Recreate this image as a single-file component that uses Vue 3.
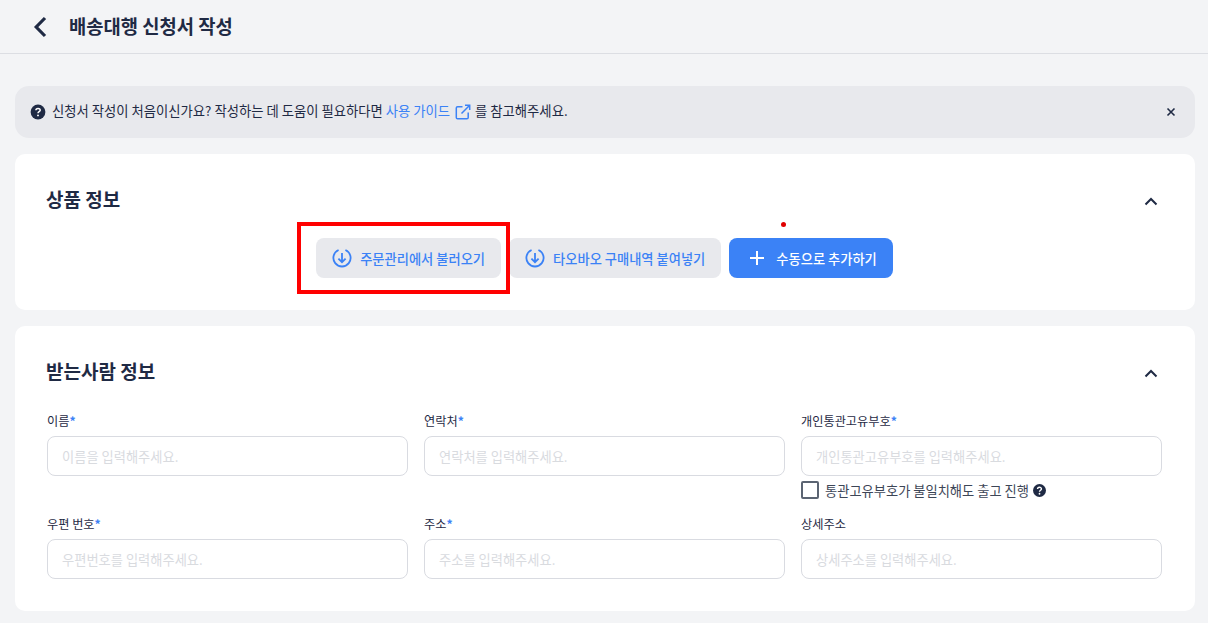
<script setup>
const rows = [
  { label: "이름", required: true, placeholder: "이름을 입력해주세요." },
  { label: "연락처", required: true, placeholder: "연락처를 입력해주세요." },
  { label: "개인통관고유부호", required: true, placeholder: "개인통관고유부호를 입력해주세요.", customs: true },
  { label: "우편 번호", required: true, placeholder: "우편번호를 입력해주세요." },
  { label: "주소", required: true, placeholder: "주소를 입력해주세요." },
  { label: "상세주소", required: false, placeholder: "상세주소를 입력해주세요." },
];
</script>

<template>
  <div class="page">
    <header class="top-bar">
      <svg class="back" width="14" height="22" viewBox="0 0 14 22" fill="none">
        <path d="M12 2 L3.2 11 L12 20" stroke="#1f2a44" stroke-width="3.2" />
      </svg>
      <h1>배송대행 신청서 작성</h1>
    </header>

    <main class="content">
      <div class="notice">
        <svg class="help" width="16" height="16" viewBox="0 0 16 16">
          <circle cx="8" cy="8" r="7.4" fill="#1f2a44" />
          <path d="M5.9 6.3 C5.9 3.8 10.2 3.8 10.2 6.2 C10.2 7.7 8 7.6 8 9.2" fill="none" stroke="#fff" stroke-width="1.5" />
          <circle cx="8" cy="11.4" r="0.95" fill="#fff" />
        </svg>
        <span class="notice-text">신청서 작성이 처음이신가요? 작성하는 데 도움이 필요하다면</span>
        <a class="guide">사용 가이드</a>
        <svg class="external" width="16" height="16" viewBox="0 0 16 16" fill="none" stroke="#3b82f6" stroke-width="1.5">
          <path d="M7.5 2.8 H2.6 A1.3 1.3 0 0 0 1.3 4.1 V13.4 A1.3 1.3 0 0 0 2.6 14.7 H11.9 A1.3 1.3 0 0 0 13.2 13.4 V8.5" />
          <path d="M6.5 9.5 L14.7 1.3 M10 1.3 H14.7 V6" />
        </svg>
        <span class="notice-text">를 참고해주세요.</span>
        <svg class="close" width="10" height="10" viewBox="0 0 10 10" fill="none" stroke="#1f2a44" stroke-width="1.6">
          <path d="M1.5 1.5 L8.5 8.5 M8.5 1.5 L1.5 8.5" />
        </svg>
      </div>

      <section class="card product">
        <div class="card-head">
          <h2>상품 정보</h2>
          <svg width="14" height="9" viewBox="0 0 14 9" fill="none" stroke="#1f2a44" stroke-width="2">
            <path d="M1.5 7.5 L7 2 L12.5 7.5" />
          </svg>
        </div>
        <div class="actions">
          <button class="btn soft first">
            <svg width="20" height="20" viewBox="0 0 20 20" fill="none" stroke="#3b82f6" stroke-width="1.8">
              <path d="M6.6 2 A8.6 8.6 0 1 0 13.4 2" />
              <path d="M10 5 V14 M6.4 10.6 L10 14.2 L13.6 10.6" />
            </svg>
            주문관리에서 불러오기
            <span class="highlight"></span>
          </button>
          <button class="btn soft">
            <svg width="20" height="20" viewBox="0 0 20 20" fill="none" stroke="#3b82f6" stroke-width="1.8">
              <path d="M6.6 2 A8.6 8.6 0 1 0 13.4 2" />
              <path d="M10 5 V14 M6.4 10.6 L10 14.2 L13.6 10.6" />
            </svg>
            타오바오 구매내역 붙여넣기
          </button>
          <button class="btn solid">
            <svg width="16" height="16" viewBox="0 0 16 16" fill="none" stroke="#fff" stroke-width="2">
              <path d="M8 1 V15 M1 8 H15" />
            </svg>
            수동으로 추가하기
            <span class="dot"></span>
          </button>
        </div>
      </section>

      <section class="card receiver">
        <div class="card-head">
          <h2>받는사람 정보</h2>
          <svg width="14" height="9" viewBox="0 0 14 9" fill="none" stroke="#1f2a44" stroke-width="2">
            <path d="M1.5 7.5 L7 2 L12.5 7.5" />
          </svg>
        </div>
        <div class="form-grid">
          <div v-for="row in rows" :key="row.label" class="field">
            <label>{{ row.label }}<em v-if="row.required">*</em></label>
            <input type="text" :placeholder="row.placeholder" />
            <div v-if="row.customs" class="check-row">
              <span class="checkbox"></span>
              <span>통관고유부호가 불일치해도 출고 진행</span>
              <svg width="13" height="13" viewBox="0 0 16 16">
                <circle cx="8" cy="8" r="8" fill="#1f2a44" />
                <path d="M5.6 6.2 C5.6 3.3 10.4 3.3 10.4 6.1 C10.4 7.8 8 7.7 8 9.5" fill="none" stroke="#fff" stroke-width="1.7" />
                <circle cx="8" cy="12" r="1.1" fill="#fff" />
              </svg>
            </div>
          </div>
        </div>
      </section>
    </main>
  </div>
</template>

<style scoped>
.page {
  height: 623px;
  overflow: hidden;
  background: #f3f4f6;
  color: #1f2a44;
  font-family: "Noto Sans CJK KR", "Noto Sans", sans-serif;
}
.top-bar {
  height: 53px;
  display: flex;
  align-items: center;
  padding-left: 33px;
  border-bottom: 1px solid #dcdee3;
}
.back {
  margin-right: 22px;
}
h1 {
  margin: 0 0 2px;
  font-size: 18.75px;
  font-weight: 700;
}
.content {
  padding: 32px 13px 0 15px;
  display: flex;
  flex-direction: column;
  gap: 16px;
}
.notice {
  height: 52px;
  display: flex;
  align-items: center;
  padding: 0 19px 0 15px;
  border-radius: 14px;
  background: #e8e9ed;
  font-size: 13.33px;
}
.help {
  margin-right: 6px;
}
.notice-text,
.guide {
  padding-bottom: 3px;
}
.guide {
  margin-left: 3px;
  color: #3b82f6;
}
.external {
  margin: 0 4px 0 5px;
}
.close {
  margin-left: auto;
}
.card {
  background: #fff;
  border-radius: 10px;
  padding: 0 32px 0 31px;
}
.card-head {
  height: 30px;
  display: flex;
  justify-content: space-between;
  align-items: center;
  padding-right: 5px;
}
h2 {
  margin: 0 0 4px;
  font-size: 19px;
  line-height: 26px;
  font-weight: 700;
}
.product {
  height: 156px;
  padding-top: 32px;
  box-sizing: border-box;
}
.actions {
  margin-top: 22px;
  display: flex;
  justify-content: center;
  gap: 8px;
}
.btn {
  position: relative;
  height: 40px;
  display: flex;
  align-items: center;
  gap: 8px;
  padding: 0 16px;
  border: 0;
  border-radius: 8px;
  font-family: inherit;
  font-size: 13.25px;
  font-weight: 500;
}
.soft {
  background: #e8e9ed;
  color: #3b82f6;
}
.solid {
  background: #3b82f6;
  color: #fff;
  gap: 11px;
  padding-left: 20px;
}
.highlight {
  position: absolute;
  z-index: 1;
  left: -19px;
  top: -16px;
  width: 205px;
  height: 64px;
  border: 4px solid #ff0000;
}
.dot {
  position: absolute;
  left: 52px;
  top: -16px;
  width: 5px;
  height: 5px;
  border-radius: 50%;
  background: #e00000;
}
.receiver {
  height: 285px;
  padding-top: 32px;
  box-sizing: border-box;
}
.form-grid {
  margin-top: 22px;
  margin-left: 1px;
  display: grid;
  grid-template-columns: repeat(3, 361px);
  gap: 23px 16px;
}
.field {
  min-height: 80px;
}
label {
  display: block;
  height: 20px;
  margin-bottom: 6px;
  font-size: 12.2px;
  line-height: 22px;
}
label em {
  color: #3b82f6;
  font-style: normal;
  font-weight: 700;
}
input {
  display: block;
  box-sizing: border-box;
  width: 100%;
  height: 40px;
  padding: 0 14px;
  border: 1px solid #d9dbe1;
  border-radius: 8px;
  background: #fff;
  font-family: inherit;
  font-size: 13.25px;
  outline: none;
}
input::placeholder {
  color: #d9dbdf;
}
.check-row {
  display: flex;
  align-items: center;
  gap: 6px;
  margin-top: 4px;
  margin-bottom: -24px;
  height: 20px;
  font-size: 13.25px;
  color: #3d4657;
}
.check-row svg {
  margin-left: -2px;
}
.checkbox {
  box-sizing: border-box;
  width: 18px;
  height: 18px;
  border: 2px solid #5b6472;
  border-radius: 2px;
}
</style>

<style>
html,
body {
  margin: 0;
  background: #f3f4f6;
}
</style>
